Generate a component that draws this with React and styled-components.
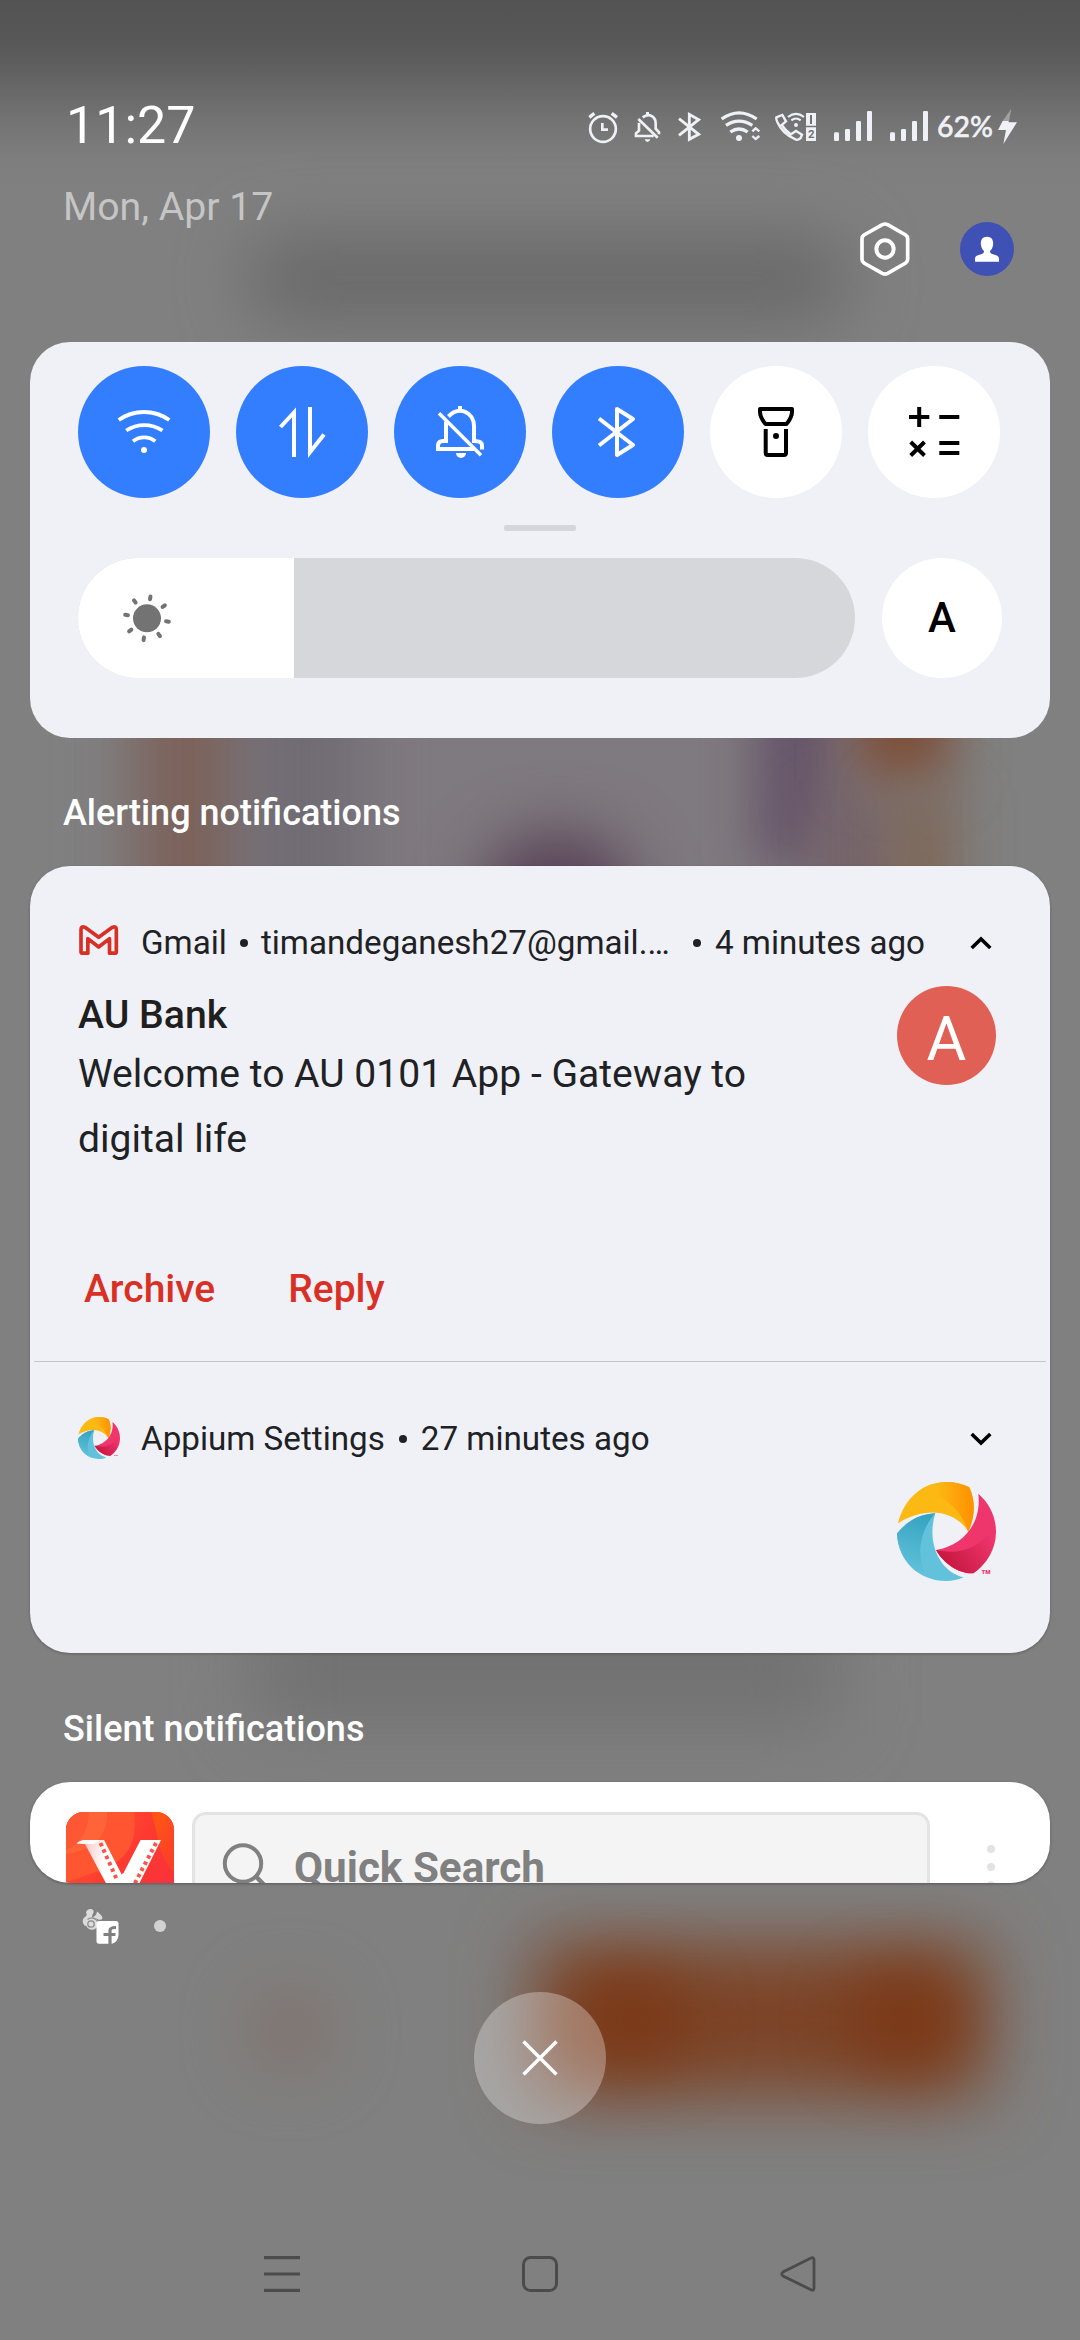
import React from "react";
import styled, { createGlobalStyle, css } from "styled-components";

const GlobalStyle = createGlobalStyle`
  *, *::before, *::after { box-sizing: border-box; }
  html, body { margin: 0; padding: 0; background: #808080; }
  body { font-family: Roboto, "Noto Sans", sans-serif; }
  svg { display: block; flex: none; }
`;

/* ---------- Wallpaper behind the shade ---------- */

const Screen = styled.div`
  position: relative;
  isolation: isolate;
  width: 1080px;
  height: 2340px;
  overflow: hidden;
  display: flex;
  flex-direction: column;
  background: linear-gradient(
      #535353 0,
      #575757 40px,
      #606060 70px,
      #6c6c6c 100px,
      #767676 130px,
      #7e7e7e 160px,
      #808080 185px
    )
    #808080;
`;

const Wallpaper = styled.div`
  position: absolute;
  inset: 0;
  z-index: -1;
  overflow: hidden;
`;

const Smudge = styled.div`
  position: absolute;
  left: ${(p) => p.$x}px;
  top: ${(p) => p.$y}px;
  width: ${(p) => p.$w}px;
  height: ${(p) => p.$h}px;
  border-radius: ${(p) => p.$r || 0}px;
  background: ${(p) => p.$c};
  filter: blur(${(p) => p.$blur || 28}px);
`;

const smudges = [
  { x: 250, y: 238, w: 595, h: 82, r: 30, c: "#686868", blur: 34 },
  { x: 130, y: 640, w: 790, h: 330, c: "#7f7a7f", blur: 34 },
  { x: 135, y: 660, w: 110, h: 300, c: "#7c645c", blur: 26 },
  { x: 245, y: 660, w: 115, h: 300, c: "#716c74", blur: 30 },
  { x: 480, y: 835, w: 155, h: 150, r: 70, c: "#573f55", blur: 32 },
  { x: 755, y: 640, w: 80, h: 225, c: "#67566a", blur: 24 },
  { x: 810, y: 800, w: 90, h: 120, c: "#75646a", blur: 26 },
  { x: 855, y: 660, w: 95, h: 120, c: "#7d4f38", blur: 26 },
  { x: 890, y: 790, w: 65, h: 140, c: "#7e6858", blur: 26 },
  { x: 255, y: 1610, w: 580, h: 115, c: "#717171", blur: 36 },
  { x: 245, y: 1985, w: 90, h: 90, r: 45, c: "#80746f", blur: 30 },
  { x: 535, y: 1944, w: 450, h: 152, c: "#7c4326", blur: 36 },
  { x: 575, y: 1975, w: 110, h: 90, r: 45, c: "#7b3815", blur: 32 },
  { x: 850, y: 1975, w: 110, h: 90, r: 45, c: "#7b3815", blur: 32 },
];

/* ---------- Status bar ---------- */

const StatusBar = styled.header`
  display: flex;
  align-items: center;
  justify-content: space-between;
  height: 60px;
  margin-top: 96px;
  padding: 0 62px 0 66px;
`;

const Clock = styled.time`
  font-size: 52px;
  line-height: 60px;
  color: #fff;
`;

const StatusIcons = styled.div`
  display: flex;
  align-items: center;
  height: 35px;
  margin-top: 1px;
  color: #f0f1f6;
`;

const Slot = styled.span`
  display: flex;
  margin-right: ${(p) => p.$gap}px;
`;

const BatteryText = styled.span`
  width: 54px;
  margin-right: 6px;
  padding-bottom: 2px;
  font-family: Lato, Roboto, sans-serif;
  font-size: 28.5px;
  font-weight: 500;
  line-height: 32px;
  white-space: nowrap;
  -webkit-text-stroke: 0.5px currentColor;
`;

const SimText = styled.text`
  font: 700 34px Roboto, sans-serif;
  fill: #727272;
`;

function StatusGlyph({ x, w, children }) {
  return (
    <svg
      width={w / 3}
      height="35"
      viewBox={`${x} 87 ${w} 105`}
      fill="none"
      stroke="currentColor"
      strokeWidth="8"
    >
      {children}
    </svg>
  );
}

const AlarmIcon = () => (
  <StatusGlyph x={84} w={93}>
    <circle cx="129" cy="147" r="38.500" />
    <path d="M88 112l15-12M155 100l16 12" strokeWidth="10" />
    <path d="M127 129v20h17" />
  </StatusGlyph>
);

const MutedIcon = () => (
  <StatusGlyph x={222} w={81}>
    <path d="M248 112C268 97 288 110 287 132V146L297 157V163" />
    <path d="M237 128V152L228 160V168H281" />
    <path d="M235 117l58 56" />
    <path d="M258 96h9v9h-9zM254 178h17q-2 8-8.500 8t-8.500-8z" fill="currentColor" stroke="none" />
  </StatusGlyph>
);

const BluetoothIcon = () => (
  <StatusGlyph x={351} w={75}>
    <path d="M357 116L416 163L388 178V103L416 119L357 166" strokeWidth="8.500" />
  </StatusGlyph>
);

const WifiIcon = () => (
  <StatusGlyph x={480} w={123}>
    <path d="M485 117Q537 80 590 117M498 136Q537 111 577 136M511 156Q537 138 563 156" strokeWidth="10" />
    <circle cx="537" cy="174" r="9" fill="currentColor" stroke="none" />
    <path d="M577 154l10-9 11 9M577 168l10 9 11-9" strokeWidth="7" />
  </StatusGlyph>
);

const WifiCallIcon = () => (
  <StatusGlyph x={645} w={126}>
    <path
      d="M649 112L667 105L678 124L665 135C672 146 682 155 693 163L708 153L726 164L722 174Q714 181 708 179C682 168 662 150 652 126Q648 118 649 112Z"
      strokeWidth="7"
    />
    <path d="M684 111Q708 92 732 111M694 121Q708 110 722 121" strokeWidth="6.500" />
    <circle cx="708" cy="135" r="6" fill="currentColor" stroke="none" />
    <path d="M738 99h30v38h-30zM738 142h30v41h-30z" fill="currentColor" stroke="none" />
    <path d="M753 105v27" stroke="#727272" strokeWidth="6" />
    <SimText x="744" y="175" stroke="none">2</SimText>
  </StatusGlyph>
);

const SignalIcon = () => (
  <StatusGlyph x={819} w={120}>
    <g fill="currentColor" stroke="none">
      <rect x="822" y="157" width="15" height="26" rx="4" />
      <rect x="855" y="147" width="15" height="36" rx="4" />
      <rect x="888" y="123" width="15" height="60" rx="4" />
      <rect x="921" y="93" width="15" height="90" rx="4" />
    </g>
  </StatusGlyph>
);

const BoltIcon = () => (
  <StatusGlyph x={1311} w={63}>
    <path d="M1354 86L1328 123H1347Z" fill="#a0a0a1" stroke="none" />
    <path d="M1328 123H1346V127H1371L1330 192L1338 150H1314Z" fill="currentColor" stroke="none" />
  </StatusGlyph>
);

/* ---------- Date and account row ---------- */

const DateRow = styled.div`
  display: flex;
  align-items: flex-start;
  height: 186px;
  padding: 0 66px 0 63px;
`;

const DateText = styled.span`
  flex: 1;
  margin-top: 28px;
  font-size: 39.2px;
  line-height: 46px;
  color: #c5c5c5;
`;

const HeaderActions = styled.div`
  display: flex;
  gap: 48px;
  margin-top: 66px;
`;

const SettingsIcon = () => (
  <svg width="54" height="54" viewBox="895 426 162 162" fill="none" stroke="#fff" strokeWidth="11">
    <path d="M968 434Q976 430 984 434L1038 465Q1044 469 1044 476V538Q1044 545 1038 549L984 580Q976 584 968 580L913 549Q907 545 907 538V476Q907 469 913 465Z" />
    <circle cx="976" cy="507" r="26" strokeWidth="12" />
  </svg>
);

const AccountIcon = () => (
  <svg width="54" height="54" viewBox="1200 426 162 162">
    <circle cx="1281" cy="507" r="81" fill="#3f51b5" />
    <path
      d="M1281 470c13 0 19 9 18.500 21c-.5 10-4 17-9.500 22c0 6 3 8 9 10c11 3 18 5 18 14v8h-72v-8c0-9 7-11 18-14c6-2 9-4 9-10c-5.500-5-9-12-9.500-22c-.5-12 5.500-21 18.500-21z"
      fill="#fff"
    />
  </svg>
);

/* ---------- Quick settings ---------- */

const Panel = styled.section`
  margin: 0 30px;
  border-radius: 40px;
  background: #f0f1f6;
  flex: none;
`;

const QuickPanel = styled(Panel)`
  display: flex;
  flex-direction: column;
  height: 396px;
  padding: 24px 48px 60px;
`;

const Tiles = styled.div`
  display: flex;
  gap: 26px;
`;

const round = css`
  display: flex;
  align-items: center;
  justify-content: center;
  flex: none;
  padding: 0;
  border: 0;
  border-radius: 50%;
`;

const Tile = styled.button`
  ${round}
  width: 132px;
  height: 132px;
  background: ${(p) => (p.$on ? "#337dff" : "#fff")};
  color: ${(p) => (p.$on ? "#fff" : "#000")};
`;

const Handle = styled.div`
  width: 72px;
  height: 6px;
  margin: 27px auto;
  border-radius: 2px;
  background: #d5d6d8;
`;

const BrightnessRow = styled.div`
  display: flex;
  gap: 27px;
  margin-right: -2px;
`;

const Track = styled.div`
  width: 777px;
  height: 120px;
  border-radius: 60px;
  overflow: hidden;
  background: #d6d7db;
`;

const TrackFill = styled.div`
  width: 216px;
  height: 120px;
  background: #fff;
`;

const AutoButton = styled.button`
  ${round}
  width: 120px;
  height: 120px;
  background: #fff;
  color: #000;
  font: 500 42px/48px Roboto, sans-serif;
`;

function TileGlyph({ children }) {
  return (
    <svg width="132" height="132" viewBox="0 0 132 132" fill="none" stroke="currentColor" strokeWidth="4">
      {children}
    </svg>
  );
}

const tiles = [
  {
    name: "Wi-Fi",
    on: true,
    art: (
      <>
        <path d="M40.700 54A44 44 0 0 1 91.300 54M48.200 64.500A33 33 0 0 1 84.500 64.500M55 75.300A18 18 0 0 1 77.300 75.300" strokeWidth="3.800" />
        <circle cx="66" cy="84" r="3" fill="currentColor" stroke="none" />
      </>
    ),
  },
  {
    name: "Mobile data",
    on: true,
    art: <path d="M44.500 61L58 46.500V91M74 41V86.200L88 68.500" />,
  },
  {
    name: "Mute",
    on: true,
    art: (
      <>
        <path d="M54.500 50.500C65 39.500 80 46 80 60V75C85 75 88 76 88 79V83.500" />
        <path d="M52 55.500V75H49Q44 75 44 80V83H80" />
        <path d="M45 47.300L87 89.300" strokeWidth="3.600" />
        <path d="M64 40h4v5h-4zM62 87h10a5 5 0 0 1-10 0z" fill="currentColor" stroke="none" />
      </>
    ),
  },
  {
    name: "Bluetooth",
    on: true,
    art: <path d="M47 52.500L81 79L65 89V43L81 53L47 79.500" strokeLinejoin="round" />,
  },
  {
    name: "Flashlight",
    on: false,
    art: (
      <>
        <path d="M50 43H82V46C82 51 79 55 76.500 58H55.500C53 55 50 51 50 46Z" strokeLinejoin="round" />
        <path d="M55.700 63V87Q55.700 89 57.700 89H74Q76 89 76 87V63" />
        <circle cx="66" cy="70" r="3" fill="currentColor" stroke="none" />
      </>
    ),
  },
  {
    name: "Calculator",
    on: false,
    art: (
      <>
        <path d="M41 51H61.300M51.200 41V61M71.300 51H91.300M71.300 77H91.300M71.300 87H91.300" />
        <path d="M42.700 76L56.500 89.500M56.500 76L42.700 89.500" />
      </>
    ),
  },
];

const rayAngles = [9, 54, 99, 144, 189, 234, 279, 324];

const SunIcon = () => (
  <svg width="132" height="120" viewBox="0 0 132 120">
    <circle cx="69" cy="60.300" r="14" fill="#737373" />
    {rayAngles.map((a) => (
      <path
        key={a}
        d="M69 38.200v2.800"
        stroke="#737373"
        strokeWidth="4"
        strokeLinecap="round"
        transform={`rotate(${a} 69 60.3)`}
      />
    ))}
  </svg>
);

/* ---------- Notifications ---------- */

const SectionLabel = styled.h2`
  flex: none;
  height: ${(p) => p.$h}px;
  margin: 0;
  padding: ${(p) => p.$h - 75}px 63px 0;
  font-size: 36px;
  font-weight: 500;
  line-height: 44px;
  color: #fff;
`;

const AlertPanel = styled(Panel)`
  height: 787px;
  box-shadow: 0 1px 3px rgba(0, 0, 0, 0.25);
`;

const Notification = styled.article`
  display: flex;
  flex-direction: column;
  height: ${(p) => p.$h}px;
  padding: 57px 54px 0 48px;
  color: #202124;
`;

const Divider = styled.hr`
  height: 1px;
  margin: 0 4px;
  border: 0;
  background: #c5c6ca;
`;

const NotificationHeader = styled.div`
  display: flex;
  align-items: center;
  height: 40px;
  padding-right: 4px;
  font-size: 33.2px;
  line-height: 40px;
  white-space: nowrap;
`;

const AppIcon = styled.span`
  display: flex;
  width: 42px;
  margin: 0 21px ${(p) => p.$lift}px 0;
`;

const Bullet = styled.i`
  width: 8px;
  height: 8px;
  margin: 0 ${(p) => p.$gap || 14}px;
  border-radius: 50%;
  background: currentColor;
`;

const Account = styled.span`
  width: 418px;
`;

const Expander = styled.span`
  margin-left: auto;
`;

const Body = styled.div`
  display: flex;
  justify-content: space-between;
`;

const Message = styled.div`
  width: 700px;
  padding-top: 29px;
  font-size: 39.1px;
`;

const Title = styled.h3`
  margin: 0 0 4px;
  font-size: 39.2px;
  font-weight: 500;
  line-height: 46px;
  color: #1f1f1f;
`;

const Text = styled.p`
  margin: 0;
  line-height: 65px;
`;

const LargeIcon = styled.div`
  display: flex;
  align-items: center;
  justify-content: center;
  width: 99px;
  height: 99px;
  margin: 23px 0 0 auto;
  border-radius: 50%;
  background: ${(p) => p.$bg || "none"};
  color: #fff;
  font-size: 61px;
  line-height: 70px;
  padding-top: ${(p) => (p.$bg ? 6 : 0)}px;
`;

const Actions = styled.div`
  display: flex;
  gap: 73px;
  margin-top: 94px;
  padding-left: 6px;
`;

const Action = styled.button`
  padding: 0;
  border: 0;
  background: none;
  font: 500 39px/46px Roboto, sans-serif;
  color: #d93025;
`;

const Chevron = ({ up }) => (
  <svg width="22" height="14" viewBox="0 0 22 14" fill="none" stroke="#000" strokeWidth="3.600">
    <path d={up ? "M1.700 12L11 3L20.300 12" : "M1.700 2L11 11L20.300 2"} />
  </svg>
);

const GmailIcon = () => (
  <svg width="42" height="30" viewBox="145 465 126 90" fill="none" stroke="#d93025" strokeWidth="11" strokeLinejoin="round">
    <path d="M154 545V479Q154 467 166 472L207 502L248 472Q260 467 260 479V545Q260 549.500 255 549.500H239.500V506L207 531L174.500 506V549.500H159Q154 549.500 154 545Z" />
  </svg>
);

function AppiumLogo({ size, id }) {
  return (
    <svg width={size} height={size} viewBox="0 0 99 99">
      <defs>
        <linearGradient id={`${id}-y`} x1="0.300" x2="1" y1="0" y2="0">
          <stop offset="0" stopColor="#fcb813" />
          <stop offset="1" stopColor="#ff9000" />
        </linearGradient>
        <linearGradient id={`${id}-b`} x1="0.600" x2="0.400" y1="0" y2="1">
          <stop offset="0" stopColor="#36a3c0" />
          <stop offset="1" stopColor="#62c2dc" />
        </linearGradient>
        <linearGradient id={`${id}-p`} x1="0" x2="1" y1="0.700" y2="0.200">
          <stop offset="0" stopColor="#c2143c" />
          <stop offset="1" stopColor="#ee356c" />
        </linearGradient>
      </defs>
      <path d="M1 41.300C8 14 28 0 49 0C58 0 66 2 72.300 5.300C79 20 78 35 71.300 49.700C58 28 28 24 1 41.300Z" fill="#fcb813" />
      <path d="M25 11.500C30 5 38 0 49 0C58 0 66 2 72.300 5.300C79 20 78 35 71.300 49.700C64 28 49 13 25 11.500Z" fill={`url(#${id}-y)`} />
      <path d="M81.300 11.700C92 21 99 34 99 50C99 67 90 82 76.300 91.300C62 92 47 82 39 68C66 64 85 41 81.300 11.700Z" fill="#ee356c" />
      <path d="M39 68C61 73 80 67 92 51L97 60C94 73 87 84 76.300 91.300C62 92 47 82 39 68Z" fill={`url(#${id}-p)`} />
      <path d="M38.300 31.300C22 32 9 40 0 51.500C1 80 23 99 49 99C55 99 61 98 66.700 95.300C43 90 29 61 38.300 31.300Z" fill="#62c2dc" />
      <path d="M38.300 31.300C22 32 9 40 0 51.500C.5 66 8 80 19 89L28 92C21 76 20 52 38.300 31.300Z" fill={`url(#${id}-b)`} />
      <text x="84.500" y="91.700" fontFamily="Roboto, sans-serif" fontSize="6" fontWeight="900" fill="#ee356c">TM</text>
    </svg>
  );
}

/* ---------- Silent notification ---------- */

const SilentPanel = styled(Panel)`
  display: flex;
  align-items: flex-start;
  height: 101px;
  padding: 30px 54px 0 36px;
  overflow: hidden;
  background: #fff;
  box-shadow: 0 1px 3px rgba(0, 0, 0, 0.3);
`;

const SearchBox = styled.div`
  display: flex;
  align-items: center;
  flex: none;
  width: 738px;
  height: 108px;
  margin: 0 57px 0 18px;
  padding-left: 25px;
  border: 3px solid #e3e3e3;
  border-radius: 14px;
  background: #f4f4f4;
  color: #808080;
  font-size: 42.2px;
  font-weight: 700;
  line-height: 48px;
`;

const SearchLabel = styled.span`
  margin: 4px 0 0 24px;
`;

const Dots = styled.div`
  display: flex;
  flex-direction: column;
  gap: 10px;
  margin-top: 33px;
`;

const Dot = styled.i`
  width: 8px;
  height: 8px;
  border-radius: 50%;
  background: #e3e3e3;
`;

const VideoAppIcon = () => (
  <svg width="108" height="108" viewBox="0 0 108 108">
    <defs>
      <linearGradient id="tile" x1="0" x2="1" y1="0" y2="0.800">
        <stop offset="0" stopColor="#ff5a2e" />
        <stop offset="0.550" stopColor="#fd3a30" />
        <stop offset="1" stopColor="#f9303c" />
      </linearGradient>
      <linearGradient id="edge" x1="0.500" x2="1" y1="0" y2="0.600">
        <stop offset="0" stopColor="#ff5416" />
        <stop offset="1" stopColor="#fb4028" />
      </linearGradient>
      <linearGradient id="arm" x1="0" x2="1" y1="0.200" y2="0.400">
        <stop offset="0" stopColor="#fdb5b5" />
        <stop offset="0.600" stopColor="#fff" />
      </linearGradient>
      <clipPath id="rounded">
        <rect width="108" height="108" rx="18" />
      </clipPath>
    </defs>
    <g clipPath="url(#rounded)">
      <rect width="108" height="108" fill="url(#tile)" />
      <path d="M0 0H68C72 30 62 50 30 60L0 70Z" fill="#ff5530" />
      <path d="M0 0H41C42 24 28 38 0 42Z" fill="#ff6438" />
      <path d="M0 0H23C22 20 14 32 0 38Z" fill="#fd5733" />
      <path d="M85 0H108V60C94 50 92 20 85 0Z" fill="url(#edge)" />
      <path d="M10.700 31.500Q14 28 19 28H38L57.500 66L50 90L19 32Z" fill="url(#arm)" />
      <path d="M10.700 31.500Q14 28 19 28H34L28 32Z" fill="#fff" />
      <path d="M74.600 28H95L66 86Q58 98 51 88L43 72L57.500 61Z" fill="#fff" />
      <path d="M34.500 31L51.500 69M90 31L68.500 72" stroke="#fb5349" strokeWidth="4" strokeDasharray="3.500 3.500" />
    </g>
  </svg>
);

const SearchIcon = () => (
  <svg width="50" height="50" viewBox="0 0 50 50" fill="none" stroke="#808080" strokeWidth="4">
    <circle cx="23" cy="22.500" r="18.200" />
    <path d="M36 35.500L48 48" strokeWidth="4.500" />
  </svg>
);

/* ---------- Collapsed icons, close button, navigation ---------- */

const Collapsed = styled.div`
  display: flex;
  align-items: flex-start;
  height: 109px;
  padding: 25px 0 0 82px;
`;

const MoreDot = styled.i`
  width: 12px;
  height: 12px;
  margin: 12px 0 0 34px;
  border-radius: 50%;
  background: #d2d2d2;
`;

const CollapsedIcons = () => (
  <svg width="38" height="38" viewBox="0 0 38 38">
    <path
      d="M3 18C0 15 0 11 3 9C5 7.500 5 6 4 4.500C4.500 1.500 8 0 10.500 1.500C12.500 3 11.500 5 10.500 6.500C9.500 8.500 10 10 11 10.500L5 17Z"
      fill="#dcdcdc"
    />
    <path d="M11 9C13 8 14.500 7 15 3.500C17.500 5.500 20.500 8 20.500 10C20 12 17 12 16.500 11.500Z" fill="#dcdcdc" />
    <circle cx="10" cy="15.500" r="6.200" fill="#dcdcdc" />
    <circle cx="9" cy="16" r="3.200" fill="none" stroke="#8a8a8a" strokeWidth="1.300" />
    <path d="M5.500 11.500C10 8 15 11 16.500 15" fill="none" stroke="#8a8a8a" strokeWidth="1.200" />
    <path d="M14.500 15.500Q14.500 13 17 13H34Q36.500 13 36.500 15.500V27Q36 34 30 35.700H17Q14.500 35.700 14.500 33Z" fill="#fff" />
    <path d="M28 36V22.500Q28 19.500 34 19.500M21.500 26.500H33.500" fill="none" stroke="#808080" strokeWidth="3.200" />
  </svg>
);

const CloseButton = styled.button`
  ${round}
  width: 132px;
  height: 132px;
  margin: 0 auto;
  background: rgba(255, 255, 255, 0.3);
`;

const NavBar = styled.nav`
  display: flex;
  justify-content: space-between;
  flex: none;
  margin-top: 132px;
  padding: 0 264px;
`;

const NavGlyph = ({ children }) => (
  <svg width="36" height="36" viewBox="0 0 36 36" fill="none" stroke="#4b4b4b" strokeWidth="3">
    {children}
  </svg>
);

export default function App() {
  return (
    <>
      <GlobalStyle />
      <Screen>
        <Wallpaper aria-hidden="true">
          {smudges.map((s, i) => (
            <Smudge key={i} $x={s.x} $y={s.y} $w={s.w} $h={s.h} $r={s.r} $c={s.c} $blur={s.blur} />
          ))}
        </Wallpaper>

        <StatusBar>
          <Clock>11:27</Clock>
          <StatusIcons>
            <Slot $gap={15}><AlarmIcon /></Slot>
            <Slot $gap={16}><MutedIcon /></Slot>
            <Slot $gap={18}><BluetoothIcon /></Slot>
            <Slot $gap={14}><WifiIcon /></Slot>
            <Slot $gap={16}><WifiCallIcon /></Slot>
            <Slot $gap={16}><SignalIcon /></Slot>
            <Slot $gap={8}><SignalIcon /></Slot>
            <BatteryText>62%</BatteryText>
            <BoltIcon />
          </StatusIcons>
        </StatusBar>

        <DateRow>
          <DateText>Mon, Apr 17</DateText>
          <HeaderActions>
            <SettingsIcon />
            <AccountIcon />
          </HeaderActions>
        </DateRow>

        <QuickPanel>
          <Tiles>
            {tiles.map((t) => (
              <Tile key={t.name} $on={t.on} aria-label={t.name}>
                <TileGlyph>{t.art}</TileGlyph>
              </Tile>
            ))}
          </Tiles>
          <Handle />
          <BrightnessRow>
            <Track>
              <TrackFill>
                <SunIcon />
              </TrackFill>
            </Track>
            <AutoButton>A</AutoButton>
          </BrightnessRow>
        </QuickPanel>

        <SectionLabel $h={128}>Alerting notifications</SectionLabel>

        <AlertPanel>
          <Notification $h={495}>
            <NotificationHeader>
              <AppIcon $lift={6}><GmailIcon /></AppIcon>
              <span>Gmail</span>
              <Bullet $gap={13} />
              <Account>timandeganesh27@gmail.…</Account>
              <Bullet />
              <span>4 minutes ago</span>
              <Expander><Chevron up /></Expander>
            </NotificationHeader>
            <Body>
              <Message>
                <Title>AU Bank</Title>
                <Text>Welcome to AU 0101 App - Gateway to digital life</Text>
              </Message>
              <LargeIcon $bg="#e06055">A</LargeIcon>
            </Body>
            <Actions>
              <Action>Archive</Action>
              <Action>Reply</Action>
            </Actions>
          </Notification>
          <Divider />
          <Notification $h={291}>
            <NotificationHeader>
              <AppIcon $lift={3}><AppiumLogo size={42} id="small" /></AppIcon>
              <span>Appium Settings</span>
              <Bullet />
              <span>27 minutes ago</span>
              <Expander><Chevron /></Expander>
            </NotificationHeader>
            <Body>
              <LargeIcon><AppiumLogo size={99} id="large" /></LargeIcon>
            </Body>
          </Notification>
        </AlertPanel>

        <SectionLabel $h={129}>Silent notifications</SectionLabel>

        <SilentPanel>
          <VideoAppIcon />
          <SearchBox>
            <SearchIcon />
            <SearchLabel>Quick Search</SearchLabel>
          </SearchBox>
          <Dots>
            <Dot />
            <Dot />
            <Dot />
          </Dots>
        </SilentPanel>

        <Collapsed>
          <CollapsedIcons />
          <MoreDot />
        </Collapsed>

        <CloseButton aria-label="Clear all">
          <svg width="36" height="36" viewBox="0 0 36 36" stroke="#fff" strokeWidth="3.500">
            <path d="M1.500 1.500L34.500 34.500M34.500 1.500L1.500 34.500" />
          </svg>
        </CloseButton>

        <NavBar>
          <NavGlyph>
            <path d="M0 1.700H36M0 18H36M0 34.300H36" strokeWidth="3.200" />
          </NavGlyph>
          <NavGlyph>
            <rect x="1.500" y="1.500" width="33" height="33" rx="7" />
          </NavGlyph>
          <NavGlyph>
            <path d="M31.500 1.800Q34 1 34 4V32Q34 35 31.500 34L3 20Q.5 18 3 16Z" strokeWidth="2.800" />
          </NavGlyph>
        </NavBar>
      </Screen>
    </>
  );
}
